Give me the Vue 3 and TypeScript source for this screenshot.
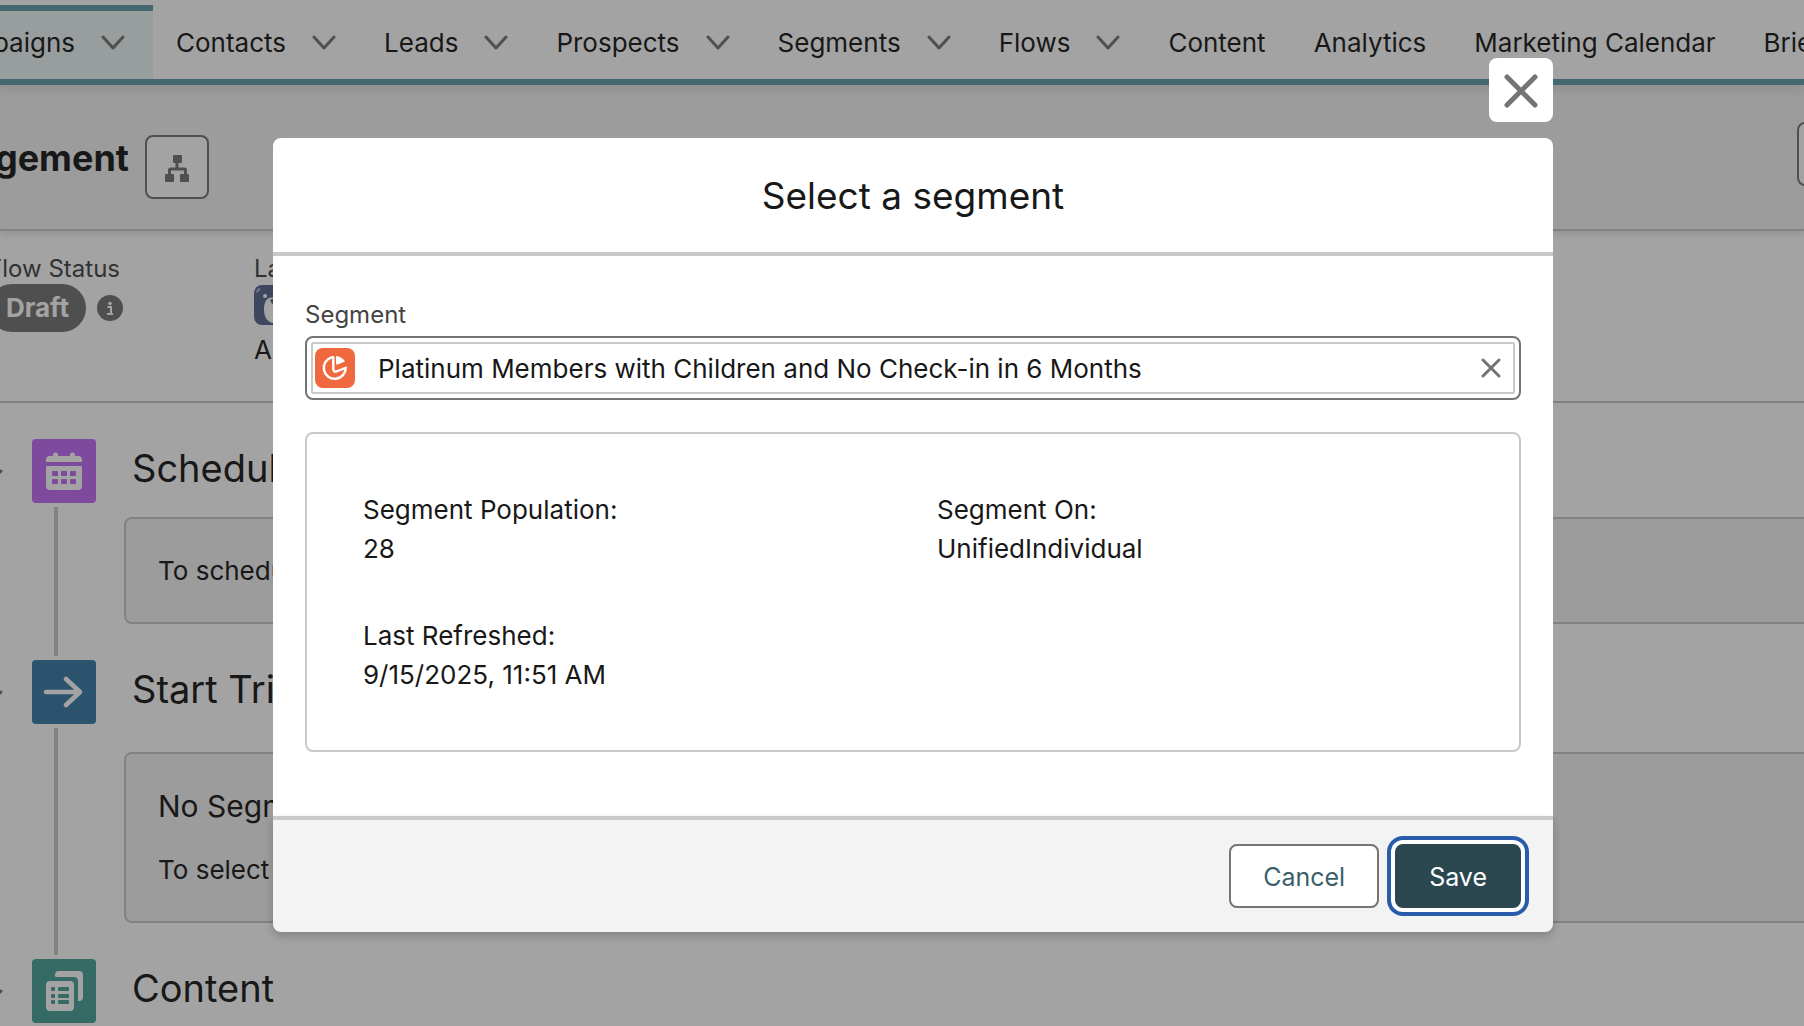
<script setup lang="ts">
import { ref } from 'vue'

interface Tab {
  label: string
  menu: boolean
  active?: boolean
}

const tabs: Tab[] = [
  { label: 'paigns', menu: true, active: true },
  { label: 'Contacts', menu: true },
  { label: 'Leads', menu: true },
  { label: 'Prospects', menu: true },
  { label: 'Segments', menu: true },
  { label: 'Flows', menu: true },
  { label: 'Content', menu: false },
  { label: 'Analytics', menu: false },
  { label: 'Marketing Calendar', menu: false },
  { label: 'Briefs', menu: false },
]

const details = [
  { term: 'Segment Population:', value: '28' },
  { term: 'Segment On:', value: 'UnifiedIndividual' },
  { term: 'Last Refreshed:', value: '9/15/2025, 11:51 AM' },
]

const segment = ref('Platinum Members with Children and No Check-in in 6 Months')
</script>

<template>
  <div class="app">
    <nav class="tabs">
      <div v-for="tab in tabs" :key="tab.label" class="tab" :class="{ active: tab.active }">
        <a href="#">{{ tab.label }}</a>
        <button v-if="tab.menu" type="button" class="plain" :aria-label="tab.label + ' menu'">
          <svg width="24" height="16" viewBox="0 0 24 16" fill="none" stroke="#747474" stroke-width="3" stroke-linecap="round" stroke-linejoin="round">
            <path d="M2 3l10 11L22 3" />
          </svg>
        </button>
      </div>
    </nav>

    <header class="record">
      <h1>gement</h1>
      <button type="button" class="square" aria-label="View hierarchy">
        <svg width="24" height="28" viewBox="0 0 24 28" fill="#747474">
          <rect x="8" y="0" width="9" height="8" rx="1" />
          <rect x="0" y="19" width="9" height="8" rx="1" />
          <rect x="15" y="19" width="9" height="8" rx="1" />
          <path d="M12 7v6M4.500 20v-5a1 1 0 0 1 1-1h14a1 1 0 0 1 1 1v5" fill="none" stroke="#747474" stroke-width="3" />
        </svg>
      </button>
      <button type="button" class="square edge" aria-label="More actions"></button>
    </header>

    <section class="facts">
      <div class="fact status">
        <span class="label">Flow Status</span>
        <div class="status-row">
          <span class="badge">Draft</span>
          <svg width="26" height="26" viewBox="0 0 26 26">
            <circle cx="13" cy="13" r="13" fill="#747474" />
            <circle cx="13" cy="8.500" r="1.800" fill="#fff" />
            <path d="M10.500 12h3.500v6.500M10 19h6" fill="none" stroke="#fff" stroke-width="2" />
          </svg>
        </div>
      </div>
      <div class="fact">
        <span class="label">Last Modified</span>
        <svg class="avatar" width="40" height="40" viewBox="0 0 40 40">
          <rect width="40" height="40" rx="8" fill="#566890" />
          <path d="M2 8q1-5 4-5q0 4-4 5z" fill="#b3bccf" />
          <circle cx="11" cy="11" r="2" fill="#fff" />
          <path d="M20 13c-7-2-10 4-10 12 0 7 4 13 10 13s10-6 10-13-3-14-10-12z" fill="#fff" />
          <path d="M16 15q5-3 8 0v6q-6 0-8-6z" fill="#566890" />
        </svg>
        <span class="owner">Admin</span>
      </div>
    </section>

    <main class="stages">
      <section class="stage">
        <button type="button" class="plain toggle" aria-label="Collapse Schedule">
          <svg width="20" height="14" viewBox="0 0 20 14" fill="none" stroke="#747474" stroke-width="3" stroke-linecap="round"><path d="M2 3l8 8 8-8" /></svg>
        </button>
        <div class="rail">
          <svg class="tile" width="64" height="64" viewBox="0 0 64 64">
            <rect width="64" height="64" rx="4" fill="#c06bf7" />
            <path d="M14 23v-2a4 4 0 0 1 4-4h3v-1a2.500 2.500 0 0 1 5 0v1h12v-1a2.500 2.500 0 0 1 5 0v1h3a4 4 0 0 1 4 4v2z" fill="#fff" />
            <path d="M15 27h34a1 1 0 0 1 1 1v19a4 4 0 0 1-4 4H18a4 4 0 0 1-4-4V28a1 1 0 0 1 1-1z" fill="#fff" />
            <g fill="#c06bf7">
              <rect x="20" y="32" width="6" height="5" rx="1" /><rect x="29" y="32" width="6" height="5" rx="1" /><rect x="38" y="32" width="6" height="5" rx="1" />
              <rect x="20" y="40" width="6" height="5" rx="1" /><rect x="29" y="40" width="6" height="5" rx="1" /><rect x="38" y="40" width="6" height="5" rx="1" />
            </g>
          </svg>
          <span class="line"></span>
        </div>
        <div class="stage-body">
          <h2>Schedule</h2>
          <div class="card"><p>To schedule</p></div>
        </div>
      </section>

      <section class="stage roomy">
        <button type="button" class="plain toggle" aria-label="Collapse Start Trigger">
          <svg width="20" height="14" viewBox="0 0 20 14" fill="none" stroke="#747474" stroke-width="3" stroke-linecap="round"><path d="M2 3l8 8 8-8" /></svg>
        </button>
        <div class="rail">
          <svg class="tile" width="64" height="64" viewBox="0 0 64 64">
            <rect width="64" height="64" rx="4" fill="#397aa6" />
            <path d="M14 32h34M34 19l14 13-14 13" fill="none" stroke="#fff" stroke-width="4.600" stroke-linecap="round" stroke-linejoin="round" />
          </svg>
          <span class="line"></span>
        </div>
        <div class="stage-body">
          <h2>Start Trigger</h2>
          <div class="card">
            <h3>No Segment</h3>
            <p>To select</p>
          </div>
        </div>
      </section>

      <section class="stage">
        <button type="button" class="plain toggle" aria-label="Collapse Content">
          <svg width="20" height="14" viewBox="0 0 20 14" fill="none" stroke="#747474" stroke-width="3" stroke-linecap="round"><path d="M2 3l8 8 8-8" /></svg>
        </button>
        <div class="rail">
          <svg class="tile" width="64" height="64" viewBox="0 0 64 64">
            <rect width="64" height="64" rx="4" fill="#4aa298" />
            <path d="M23 17v-1a4 4 0 0 1 4-4h20a4 4 0 0 1 4 4v22a4 4 0 0 1-4 4h-1V22a4 4 0 0 0-4-4H24a1 1 0 0 1-1-1z" fill="#fff" />
            <rect x="14" y="22" width="28" height="30" rx="4" fill="#fff" />
            <g fill="#4aa298">
              <rect x="19" y="28" width="4" height="4" rx="1" /><rect x="19" y="35" width="4" height="4" rx="1" /><rect x="19" y="41" width="4" height="4" rx="1" />
              <rect x="26" y="28" width="11" height="4" rx="1" /><rect x="26" y="35" width="11" height="4" rx="1" /><rect x="26" y="41" width="11" height="4" rx="1" />
            </g>
          </svg>
        </div>
        <div class="stage-body"><h2>Content</h2></div>
      </section>
    </main>

    <div class="backdrop">
      <div class="dialog" role="dialog" aria-modal="true" aria-labelledby="dialog-title">
        <button type="button" class="plain close" aria-label="Close">
          <svg width="34" height="34" viewBox="0 0 34 34" stroke="#747474" stroke-width="5" stroke-linecap="round"><path d="M3 3l28 28M31 3L3 31" /></svg>
        </button>
        <div class="panel">
          <div class="panel-head"><h2 id="dialog-title">Select a segment</h2></div>
          <div class="panel-body">
            <label for="segment">Segment</label>
            <div class="lookup">
              <div class="lookup-inner">
                <svg width="40" height="40" viewBox="0 0 40 40">
                  <rect width="40" height="40" rx="8" fill="#f0683e" />
                  <path d="M16.500 9.300a11 11 0 1 0 14.300 10.500l-9.500 3.700a2.300 2.300 0 0 1-3-2.100V9.300z" fill="none" stroke="#fff" stroke-width="2.400" stroke-linejoin="round" />
                  <path d="M21 8v7.500q0 1.500 1.500 1l7.500-3q-3-5-9-5.500z" fill="#fff" />
                </svg>
                <input id="segment" v-model="segment" type="text" />
                <button type="button" class="plain" aria-label="Clear segment" @click="segment = ''">
                  <svg width="20" height="20" viewBox="0 0 20 20" stroke="#747474" stroke-width="3" stroke-linecap="round"><path d="M2 2l16 16M18 2L2 18" /></svg>
                </button>
              </div>
            </div>
            <dl class="summary">
              <div v-for="item in details" :key="item.term">
                <dt>{{ item.term }}</dt>
                <dd>{{ item.value }}</dd>
              </div>
            </dl>
          </div>
          <div class="panel-foot">
            <button type="button" class="btn">Cancel</button>
            <button type="button" class="btn primary">Save</button>
          </div>
        </div>
      </div>
    </div>
  </div>
</template>

<style>
body {
  margin: 0;
}
</style>

<style scoped>
.app {
  position: relative;
  min-height: 100vh;
  overflow: hidden;
  background: #fff;
  color: #181818;
  font-family: Inter, 'Liberation Sans', sans-serif;
  font-size: 26px;
  line-height: 39px;
}
.app *,
.app {
  box-sizing: border-box;
}
h1, h2, h3, p, dl, dd {
  margin: 0;
  font-weight: 400;
}
button, input {
  font: inherit;
  color: inherit;
}
svg {
  display: block;
  flex: none;
}
.plain {
  display: flex;
  align-items: center;
  padding: 0;
  border: 0;
  background: none;
}

.tabs {
  position: relative;
  z-index: 1;
  display: flex;
  height: 85px;
  padding-top: 5px;
  border-bottom: 6px solid #639cab;
  box-shadow: 0 4px 10px rgba(0, 0, 0, 0.1);
  white-space: nowrap;
}
.tab {
  display: flex;
  flex: none;
  align-items: center;
  gap: 26px;
  padding: 0 25px 6px 23px;
  border-top: 6px solid transparent;
}
.tab.active {
  width: 153px;
  justify-content: flex-end;
  padding-right: 28px;
  border-top-color: #639cab;
  background: #edf5f7;
}
.tab a {
  color: inherit;
  text-decoration: none;
}

.record {
  position: relative;
  z-index: 0;
  display: flex;
  align-items: flex-start;
  gap: 16px;
  height: 146px;
  border-bottom: 2px solid #c9c9c9;
  background: #f3f3f3;
  box-shadow: 0 4px 6px rgba(0, 0, 0, 0.1);
}
.record h1 {
  display: flex;
  justify-content: flex-end;
  flex: none;
  width: 129px;
  margin-top: 49px;
  font-size: 36px;
  line-height: 48px;
  font-weight: 700;
}
.square {
  display: flex;
  align-items: center;
  justify-content: center;
  flex: none;
  width: 64px;
  height: 64px;
  margin-top: 50px;
  padding: 3px 0 0;
  border: 2px solid #747474;
  border-radius: 8px;
  background: #fff;
}
.square.edge {
  margin: 37px -57px 0 auto;
}

.facts {
  display: flex;
  height: 172px;
  padding-top: 23px;
  border-bottom: 2px solid #c9c9c9;
}
.fact {
  display: flex;
  flex-direction: column;
  flex: none;
}
.status {
  width: 266px;
  margin-left: -12px;
}
.label {
  font-size: 24px;
  line-height: 30px;
  color: #444;
}
.status .label {
  width: 132px;
  display: flex;
  justify-content: flex-end;
  white-space: nowrap;
}
.status-row {
  display: flex;
  align-items: center;
  gap: 11px;
}
.badge {
  padding: 0 17px 0 18px;
  border-radius: 24px;
  background: #747474;
  color: #fff;
  font-weight: 700;
  line-height: 48px;
}
.avatar {
  margin: 1px 0 5px;
}

.stages {
  padding-top: 36px;
}
.stage {
  display: flex;
}
.toggle {
  width: 32px;
  height: 72px;
}
.toggle svg {
  margin-left: -17px;
}
.rail {
  display: flex;
  flex-direction: column;
  width: 64px;
}
.line {
  flex: 1;
  width: 4px;
  margin: 4px 22px;
  background: #c9c9c9;
}
.stage-body {
  flex: 1;
  padding-left: 28px;
}
.stage-body h2 {
  height: 64px;
  padding-left: 8px;
  font-size: 38px;
  line-height: 59px;
}
.card {
  margin: 14px -24px 36px 0;
  padding: 32px;
  border: 2px solid #c9c9c9;
  border-radius: 8px;
  background: #f3f3f3;
}
.roomy .card {
  margin-top: 28px;
}
.card h3 {
  margin-bottom: 24px;
  font-size: 30px;
  line-height: 40px;
}

.backdrop {
  position: absolute;
  inset: 0;
  z-index: 2;
  display: flex;
  justify-content: center;
  align-items: flex-start;
  padding: 58px 0 0 22px;
  background: rgba(24, 24, 24, 0.4);
}
.dialog {
  display: flex;
  flex-direction: column;
  align-items: flex-end;
  gap: 16px;
  width: 72%;
  max-width: 1280px;
}
.close {
  justify-content: center;
  width: 64px;
  height: 64px;
  padding-top: 2px;
  border-radius: 8px;
  background: #fff;
}
.panel {
  width: 100%;
  border-radius: 8px;
}
.panel-head {
  padding: 33px 32px 31px;
  border-bottom: 4px solid #c9c9c9;
  border-radius: 8px 8px 0 0;
  background: #fff;
  text-align: center;
}
.panel-head h2 {
  font-size: 37px;
  line-height: 50px;
}
.panel-body {
  padding: 42px 32px 64px;
  background: #fff;
}
.panel-body label {
  display: block;
  font-size: 24px;
  line-height: 34px;
  padding-bottom: 4px;
  color: #444;
}
.lookup {
  padding: 4px;
  border: 2px solid #747474;
  border-radius: 8px;
}
.lookup-inner {
  display: flex;
  align-items: center;
  height: 52px;
  padding: 0 12px 0 2px;
  border: 2px solid #c9c9c9;
  border-radius: 2px;
}
.lookup input {
  flex: 1;
  min-width: 0;
  height: 40px;
  padding: 0 23px;
  border: 0;
  outline: 0;
  background: none;
}
.summary {
  display: grid;
  grid-template-columns: 1fr 1fr;
  row-gap: 48px;
  margin-top: 32px;
  padding: 56px 32px;
  border: 2px solid #c9c9c9;
  border-radius: 8px;
}
.summary div {
  padding: 0 24px;
}
.panel-foot {
  display: flex;
  justify-content: flex-end;
  gap: 16px;
  padding: 24px 32px;
  border-top: 4px solid #c9c9c9;
  border-radius: 0 0 8px 8px;
  background: #f3f3f3;
  box-shadow: 0 4px 8px rgba(0, 0, 0, 0.2);
}
.btn {
  height: 64px;
  padding: 2px 32px 0;
  border: 2px solid #747474;
  border-radius: 8px;
  background: #fff;
  color: #3b6069;
  font-size: 25px;
}
.btn.primary {
  border-color: #2b4850;
  background: #2b4850;
  color: #fff;
  box-shadow: 0 0 0 4px #fff, 0 0 0 8px #285dab;
}
</style>
